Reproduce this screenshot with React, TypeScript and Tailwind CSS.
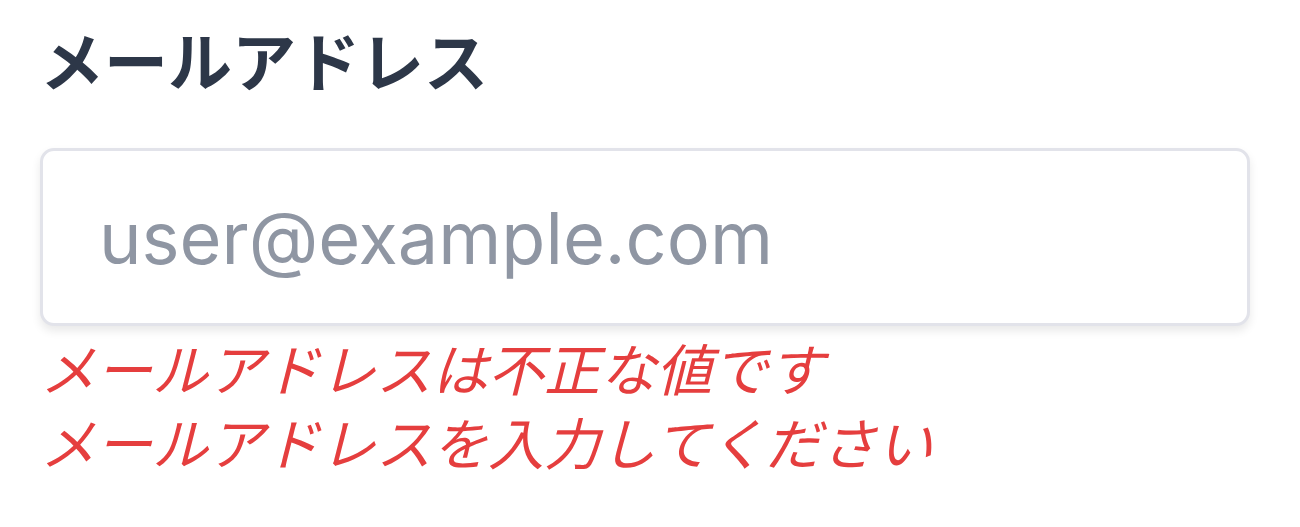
export default function App() {
  return (
    <div className="min-h-screen bg-white px-[40px] pt-[26px]">
      <label
        htmlFor="email"
        className="block text-[64px] leading-[64px] font-bold text-[#2d3748] [font-family:'Noto_Sans_CJK_JP','Noto_Sans',sans-serif]"
      >
        メールアドレス
      </label>
      <input
        id="email"
        type="email"
        placeholder="user@example.com"
        className="mt-[58px] block h-[178px] w-[1210px] rounded-[14px] border-[3px] border-[#e2e3ea] bg-white pl-[56px] text-[72px] text-[#2d3748] shadow-[0_5px_10px_rgba(0,0,0,0.09)] outline-none placeholder:text-[#8f96a3] [font-family:Inter,'Liberation_Sans',sans-serif]"
      />
      <div className="mt-[4px] text-[56px] leading-[74px] italic text-[#e53e3e] [font-family:'Noto_Sans_CJK_JP',sans-serif]">
        <p>メールアドレスは不正な値です</p>
        <p>メールアドレスを入力してください</p>
      </div>
    </div>
  );
}
